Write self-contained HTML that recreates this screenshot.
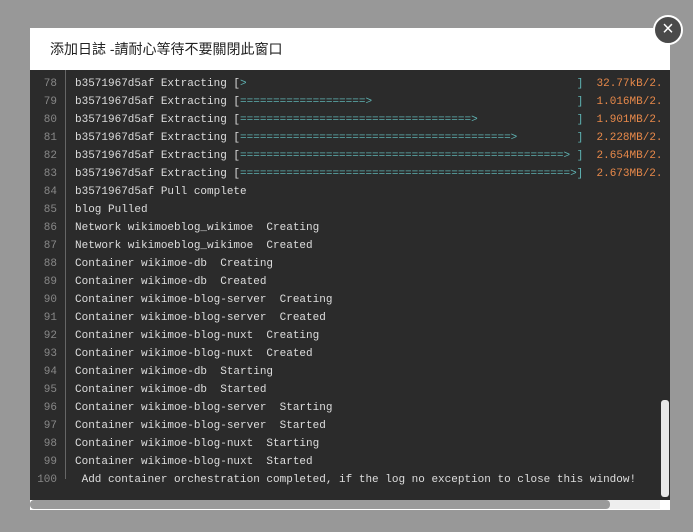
<!DOCTYPE html>
<html><head><meta charset="utf-8"><style>
body{margin:0;width:693px;height:532px;background:#989898;position:relative;overflow:hidden;font-family:"Liberation Sans","Noto Sans CJK TC",sans-serif}
.dlg{position:absolute;left:30px;top:28px;width:640px;height:482px;background:#fff}
.title{position:absolute;left:20px;top:11px;font-size:14px;color:#222}
.term{position:absolute;left:30px;top:70px;width:630px;height:430px;background:#2b2b2b;overflow:hidden}
.sep{position:absolute;left:35px;top:0;height:409px;border-left:1px solid #666}
.lines{position:absolute;left:0;top:5px;font-family:"Liberation Mono",monospace;font-size:11px;line-height:18px;white-space:pre;color:#ddd}
.ln{display:inline-block;width:27px;text-align:right;color:#888;margin-right:18px}
.a{color:#5fb3b3}.o{color:#e8894a}
.vs{position:absolute;left:660px;top:70px;width:10px;height:430px;background:#2b2b2b}
.vt{position:absolute;left:661px;top:400px;width:8px;height:97px;background:#e8e8e8;border-radius:3px}
.hs{position:absolute;left:30px;top:500px;width:634px;height:9px;background:#eee;border-radius:4px}
.ht{position:absolute;left:30px;top:500px;width:580px;height:9px;background:#9a9a9a;border-radius:4px}
.close{position:absolute;left:653px;top:15px;width:26px;height:26px;border-radius:50%;background:#4a4a4a;border:2px solid #fff;color:#fff;font-size:20px;line-height:25px;text-align:center}
</style></head><body>
<div class="dlg"><div class="title">添加日誌 -請耐心等待不要關閉此窗口</div></div>
<div class="term"><div class="sep"></div><div class="lines"><span class="ln">78</span>b3571967d5af Extracting [<span class="a">&gt;</span>                                                  <span class="a">]</span>  <span class="o">32.77kB/2.</span>
<span class="ln">79</span>b3571967d5af Extracting [<span class="a">===================&gt;</span>                               <span class="a">]</span>  <span class="o">1.016MB/2.</span>
<span class="ln">80</span>b3571967d5af Extracting [<span class="a">===================================&gt;</span>               <span class="a">]</span>  <span class="o">1.901MB/2.</span>
<span class="ln">81</span>b3571967d5af Extracting [<span class="a">=========================================&gt;</span>         <span class="a">]</span>  <span class="o">2.228MB/2.</span>
<span class="ln">82</span>b3571967d5af Extracting [<span class="a">=================================================&gt;</span> <span class="a">]</span>  <span class="o">2.654MB/2.</span>
<span class="ln">83</span>b3571967d5af Extracting [<span class="a">==================================================&gt;]</span>  <span class="o">2.673MB/2.</span>
<span class="ln">84</span>b3571967d5af Pull complete
<span class="ln">85</span>blog Pulled
<span class="ln">86</span>Network wikimoeblog_wikimoe  Creating
<span class="ln">87</span>Network wikimoeblog_wikimoe  Created
<span class="ln">88</span>Container wikimoe-db  Creating
<span class="ln">89</span>Container wikimoe-db  Created
<span class="ln">90</span>Container wikimoe-blog-server  Creating
<span class="ln">91</span>Container wikimoe-blog-server  Created
<span class="ln">92</span>Container wikimoe-blog-nuxt  Creating
<span class="ln">93</span>Container wikimoe-blog-nuxt  Created
<span class="ln">94</span>Container wikimoe-db  Starting
<span class="ln">95</span>Container wikimoe-db  Started
<span class="ln">96</span>Container wikimoe-blog-server  Starting
<span class="ln">97</span>Container wikimoe-blog-server  Started
<span class="ln">98</span>Container wikimoe-blog-nuxt  Starting
<span class="ln">99</span>Container wikimoe-blog-nuxt  Started
<span class="ln">100</span> Add container orchestration completed, if the log no exception to close this window!</div></div>
<div class="vs"></div><div class="vt"></div>
<div class="hs"></div><div class="ht"></div>
<div style="position:absolute;left:660px;top:500px;width:10px;height:10px;background:#fff"></div>
<div class="close">×</div>
</body></html>
